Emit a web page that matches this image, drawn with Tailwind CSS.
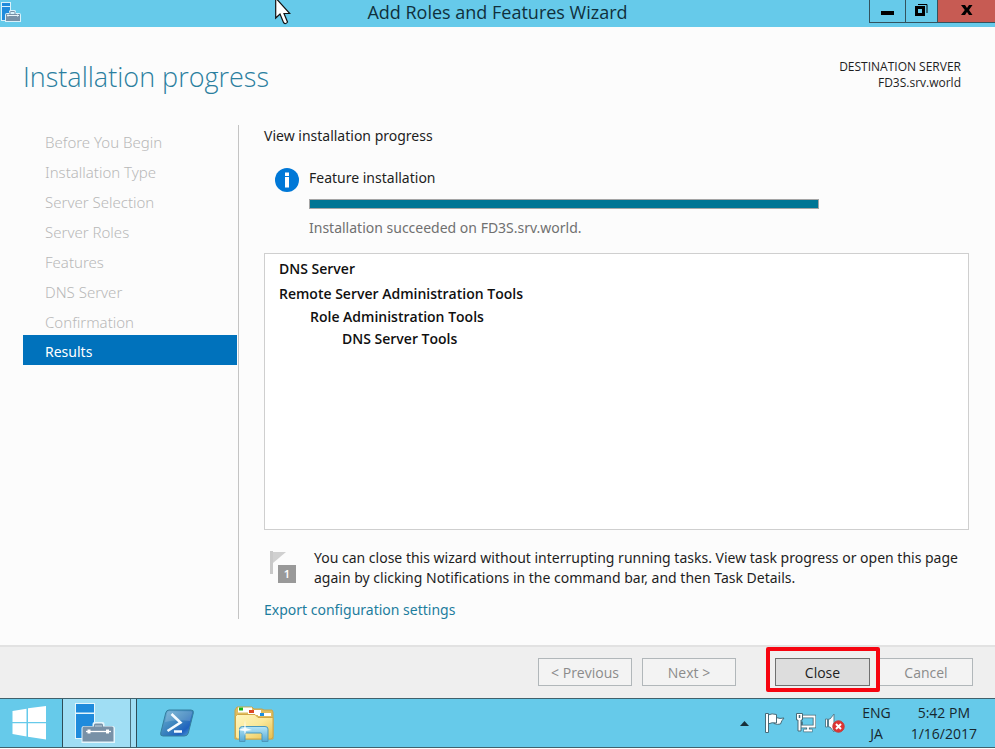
<!DOCTYPE html>
<html lang="en">
<head>
<meta charset="utf-8">
<title>Add Roles and Features Wizard</title>
<script src="https://cdn.jsdelivr.net/npm/@tailwindcss/browser@4"></script>
</head>
<body class="flex min-h-screen flex-col bg-[#fcfcfc] font-['Noto_Sans','Open_Sans',sans-serif] text-[14px] leading-5 text-[#1e1e1e]">
<svg class="hidden" aria-hidden="true">
  <symbol id="server-kit" viewBox="0 0 40 40">
    <path d="M0 0h20v36H0z" fill="#e4f5fc"/>
    <path d="M1 1h18v8.500H1zM1 11h18v24H1z" fill="#1f8bdc"/>
    <path d="M17.500 23v-2q0-2 2-2h8q2 0 2 2v2h8q2.500 0 2.500 2.500V40H6.500V25.500Q6.500 23 9 23z" fill="#e4f5fc"/>
    <path d="M19 23.500V22q0-1.500 1.500-1.500h6q1.500 0 1.500 1.500v1.500h9q1.500 0 1.500 1.500v13.500h-31V25q0-1.500 1.500-1.500z" fill="#7891a7"/>
    <path d="M20 23h7" stroke="#c3d5e0"/>
    <path d="M11 28.500h25" stroke="#fff" stroke-width="1.300"/>
    <path d="M12.500 26.500h3v4h-3zM31 26.500h3v4h-3z" fill="#fff"/>
  </symbol>
</svg>

<header class="grid h-[27px] shrink-0 grid-cols-[1fr_auto_1fr] bg-[#66caea]">
  <svg class="mt-[2px] ml-px size-5" viewBox="0 0 20 20" role="img" aria-label="Server Manager">
    <path d="M0 0h10v19H0z" fill="#d9f1fb"/>
    <path d="M1 1h8v3H1zM1 5h8v13H1z" fill="#1f8bdc"/>
    <path d="M8 11V9.500Q8 8 9.500 8h4Q15 8 15 9.500V11h3q2 0 2 2v7H4v-7q0-2 2-2z" fill="#d9f1fb"/>
    <path d="M5 12h14v7H5z" fill="#7891a7"/>
    <path d="M9 12v-1.500q0-1 1-1h3q1 0 1 1V12" stroke="#7891a7" fill="none"/>
    <path d="M6 13.500h12M7 12.500v2M16.500 12.500v2" stroke="#e9f5fa" fill="none"/>
  </svg>
  <h1 class="font-['Open_Sans',sans-serif] text-[18px] leading-[25px] text-[#10303c]">Add Roles and Features Wizard</h1>
  <div class="flex h-[23px] justify-end">
    <button type="button" aria-label="Minimize" class="flex w-9 items-center justify-center border-b border-l border-[#33535e]"><svg class="size-4" viewBox="0 0 16 16"><path d="M1 8h13v4H1z"/></svg></button>
    <button type="button" aria-label="Restore" class="flex w-8 items-center justify-center border-b border-l border-[#33535e]"><svg class="size-4" viewBox="0 0 16 16" fill="none" stroke="#000"><path d="M2.500 4.500h7v7h-7z" stroke-width="3"/><path d="M4 1.500h9V10" stroke-width="1"/></svg></button>
    <button type="button" aria-label="Close window" class="flex w-[58px] items-center justify-center border-b border-l border-[#33535e] bg-[#c75b53]"><svg class="size-4" viewBox="0 0 16 16"><path d="M2 2h4l2 3 2-3h3.500L10 7l3.500 5H10L8 9l-2 3H2l3.800-5z"/></svg></button>
  </div>
</header>

<svg class="pointer-events-none absolute top-0 left-[275px] h-[25px] w-4" viewBox="0 0 16 25" aria-hidden="true"><path d="M.7-2v20l4.300-4 3.500 8.500q2.200 2.300 4-.500L9 13.500h5.800z" fill="#fff" stroke="#111" stroke-width="1.200"/></svg>

<main class="flex flex-1 flex-col pr-[26px] pl-[23px]">
  <div class="flex h-[98px] justify-between pt-[30px] pr-2">
    <h2 class="font-['Open_Sans',sans-serif] text-[27px] leading-10 font-light text-[#2b7f9f]">Installation progress</h2>
    <p class="pt-[2px] text-right font-['Open_Sans',sans-serif] text-[12px] leading-4">DESTINATION SERVER<br>FD3S.srv.world</p>
  </div>
  <div class="mb-[26px] flex flex-1">
    <nav class="w-[216px] shrink-0 border-r border-[#c4c4c4] pr-px" aria-label="Wizard steps">
      <ol class="text-[15px] leading-[26px] font-light text-[#b8b8b8]">
        <li class="pt-1 pl-[22px]">Before You Begin</li>
        <li class="pt-1 pl-[22px]">Installation Type</li>
        <li class="pt-1 pl-[22px]">Server Selection</li>
        <li class="pt-1 pl-[22px]">Server Roles</li>
        <li class="pt-1 pl-[22px]">Features</li>
        <li class="pt-1 pl-[22px]">DNS Server</li>
        <li class="pt-1 pl-[22px]">Confirmation</li>
        <li class="bg-[#0072bc] pt-1 pl-[22px] text-[14px] leading-[26px] font-normal text-white" aria-current="step">Results</li>
      </ol>
    </nav>
    <section class="flex flex-1 flex-col pl-[25px]">
      <p class="pt-px">View installation progress</p>
      <div class="mt-[22px] flex gap-[10px] pl-[11px]">
        <svg class="size-6" viewBox="0 0 24 24" aria-hidden="true"><circle cx="12" cy="12" r="12" fill="#0078d7"/><path d="M10 4.500h4V8h-4zM10 9h4v10.500h-4z" fill="#fff"/></svg>
        <div class="flex flex-1 flex-col">
          <p id="feature">Feature installation</p>
          <div role="progressbar" aria-labelledby="feature" aria-valuenow="100" class="mt-[11px] mr-[150px] h-[10px] border border-[#a5a5a5] bg-[#007594]"></div>
          <p class="mt-[9px] text-[#707070]">Installation succeeded on FD3S.srv.world.</p>
        </div>
      </div>
      <div class="mt-[15px] flex-1 border border-[#cfcfcf] bg-white px-[14px] pt-[5px] font-['Open_Sans',sans-serif] font-semibold text-[#101010]">
        <ul>
          <li class="mb-[5px]">DNS Server</li>
          <li>Remote Server Administration Tools
            <ul class="mt-[3px] pl-[31px]">
              <li>Role Administration Tools
                <ul class="mt-[2px] pl-8"><li>DNS Server Tools</li></ul>
              </li>
            </ul>
          </li>
        </ul>
      </div>
      <div class="mt-[18px] flex gap-[17px] pl-[6px]">
        <div class="relative h-10 w-[27px] shrink-0">
          <svg class="mt-[3px] h-[23px] w-5" viewBox="0 0 20 23" aria-hidden="true"><path d="M0 0h3v23H0z" fill="#c9c9c9"/><path d="M3 1h13L3 12z" fill="#d0d0d0"/></svg>
          <span class="absolute right-px bottom-[5px] size-[18px] bg-[#999] text-center text-[11px] leading-[18px] font-semibold text-white">1</span>
        </div>
        <p class="whitespace-nowrap">You can close this wizard without interrupting running tasks. View task progress or open this page<br>again by clicking Notifications in the command bar, and then Task Details.</p>
      </div>
      <p class="mt-3 h-[19px]"><a href="#" class="text-[#1d7d9e]">Export configuration settings</a></p>
    </section>
  </div>
</main>

<footer class="flex h-[53px] shrink-0 items-start justify-end border-t-2 border-[#e2e2e2] bg-[#efefef] pt-[11px] pr-[22px] font-['Open_Sans',sans-serif]">
  <button type="button" disabled class="h-7 w-[94px] border border-[#b1b7ba] bg-[#f3f3f3] pt-px text-[#8b8b8b]">&lt; Previous</button>
  <button type="button" disabled class="ml-[10px] h-7 w-[94px] border border-[#b1b7ba] bg-[#f3f3f3] pt-px text-[#8b8b8b]">Next &gt;</button>
  <div class="relative ml-[39px]">
    <button type="button" class="block h-7 w-[95px] border border-[#707070] bg-[#dddddd] pt-px">Close</button>
    <span class="pointer-events-none absolute -top-[11px] -right-[10px] -bottom-[6px] -left-[9px] z-10 rounded-xs border-4 border-[#f60410]"></span>
  </div>
  <button type="button" disabled class="ml-[9px] h-7 w-[94px] border border-[#b1b7ba] bg-[#f3f3f3] pt-px text-[#8b8b8b]">Cancel</button>
</footer>

<nav class="mb-px flex h-[50px] shrink-0 items-stretch border-y border-[#41616c] bg-[#66caea]" aria-label="Taskbar">
  <button type="button" aria-label="Start" class="flex w-[62px] items-center pl-3">
    <svg class="size-[34px]" viewBox="0 0 34 34" fill="#fff"><path d="M.5 5l14-2.200V16H.500zM16 2.300L34 0v16H16zM.5 17.200h14v13.300L.5 28zM16 17.200h18V33.500l-18-2.800z"/></svg>
  </button>
  <button type="button" aria-label="Server Manager" class="flex w-[75px] border-x border-[#2e4d58] bg-[#a0def4]">
    <span class="flex h-full flex-1 items-center pl-3"><svg class="size-10"><use href="#server-kit"/></svg></span>
    <span class="h-full w-[6px] border-l border-[#47707e]"></span>
  </button>
  <button type="button" aria-label="PowerShell" class="ml-[21px] flex w-10 items-center">
    <svg class="h-[30px] w-10" viewBox="0 0 40 30"><defs><linearGradient id="ps" x1="0" x2="1" y1="0" y2="1"><stop offset="0" stop-color="#6fb4d6"/><stop offset=".5" stop-color="#3a82bd"/><stop offset=".75" stop-color="#1f62c0"/><stop offset="1" stop-color="#5fb0df"/></linearGradient></defs><path d="M11 2h22q3 0 2.300 3l-5 20q-.8 3-4 3H5q-3 0-2.300-3l5-20q.8-3 3.300-3z" fill="url(#ps)" stroke="#357f9f"/><path d="M11 3.200h22q1.300 0 1 1.800l-2 8Q18 11 7 14l2-8.500q.6-2.300 2-2.300z" fill="#fff" opacity=".16"/><path d="M13.500 6l9 8.500-13 8.500M16 23.500h8" fill="none" stroke="#f4fbff" stroke-width="2.600"/></svg>
  </button>
  <button type="button" aria-label="File Explorer" class="ml-9 flex w-10 items-center">
    <svg class="h-[37px] w-10" viewBox="0 0 40 37"><defs><linearGradient id="fe" x1="0" x2="1" y1="0" y2="1"><stop offset="0" stop-color="#fff6bd"/><stop offset=".5" stop-color="#fae99b"/><stop offset="1" stop-color="#e7bd4a"/></linearGradient><linearGradient id="fb" x1="0" x2="0" y1="0" y2="1"><stop offset="0" stop-color="#b5e6f8"/><stop offset="1" stop-color="#55a9d5"/></linearGradient></defs>
    <path d="M1 34V5l2-3h15l2 2h8l2 1h8l1 2v27z" fill="#dfbd5f" stroke="#c9a44a"/><path d="M4 2.500h14v5H4z" fill="#fff"/><path d="M5 2.500h4v3H5z" fill="#14b51b"/><path d="M14 5h13v5H14z" fill="#fff"/><path d="M15 5h5v3h-5z" fill="#dc4a25"/><path d="M24 8h13v3H24z" fill="#fff"/><path d="M26 8h4v3h-4z" fill="#1c8fe0"/><path d="M1.500 11l2-1.500H21l3 3h15V32l-2 2H3l-1.500-2z" fill="url(#fe)" stroke="#d1a746"/><path d="M5.500 36.500V24q0-2.500 3-2.500h22.500q3 0 3 2.500v12.500h-6v-7q0-1.500-1.500-1.500h-14q-1.500 0-1.500 1.500v7z" fill="url(#fb)" stroke="#4b99bd"/><path d="M11 15l.8 8 6.200 2-6.200 1-.8 5-.8-5-6.200-1 6.200-2z" fill="#fff" opacity=".9"/></svg>
  </button>
  <div class="ml-auto flex items-center pr-[18px] font-['Open_Sans',sans-serif] text-[#16272e]">
    <button type="button" aria-label="Show hidden icons" class="mr-[15px]"><svg class="h-[5px] w-[9px]" viewBox="0 0 9 5"><path d="M0 5l4.500-5L9 5z" fill="#18303a"/></svg></button>
    <svg class="mr-[10px] h-5 w-[21px]" viewBox="0 0 21 20" role="img" aria-label="Action Center"><path d="M12 4.500q4 1.500 8 .500-2.500 2.500-3.500 6-3 1-6.500-.500z" fill="#fff" stroke="#476b78" stroke-linejoin="round"/><path d="M4 2q4-2 8.500-.500v8.500Q8 9 4 11z" fill="#fff" stroke="#476b78"/><path d="M1.500.500h3v19h-3z" fill="#fff" stroke="#476b78"/></svg>
    <svg class="mr-[8px] h-5 w-[21px]" viewBox="0 0 21 20" role="img" aria-label="Network"><path d="M8 3.500h11.500v10H6v-5M13 13.500v4M8.500 17.500h9" fill="none" stroke="#476b78" stroke-width="3.600"/><path d="M8 3.500h11.500v10H6M13 13.500v4M9 17.500h8" fill="none" stroke="#fff" stroke-width="1.800"/><path d="M1.500.500h6v6.500H6v11H3V7H1.500z" fill="#fff" stroke="#476b78"/><path d="M4.500 2v3" stroke="#476b78" stroke-width="1.500"/></svg>
    <svg class="mr-[17px] h-5 w-[21px]" viewBox="0 0 21 20" role="img" aria-label="Sound muted"><path d="M1.500 6h2v8h-2zM4.500 6H6l4-5v18l-4-5H4.500z" fill="#fff" stroke="#597f8e"/><circle cx="14.500" cy="13.500" r="5.700" fill="#df3434" stroke="#c73b35"/><path d="M12 11l5 5m0-5l-5 5" stroke="#fff" stroke-width="2"/></svg>
    <p class="mr-5 text-center leading-[21px]">ENG<br>JA</p>
    <p class="text-center leading-[21px]">5:42 PM<br>1/16/2017</p>
  </div>
</nav>
</body>
</html>
